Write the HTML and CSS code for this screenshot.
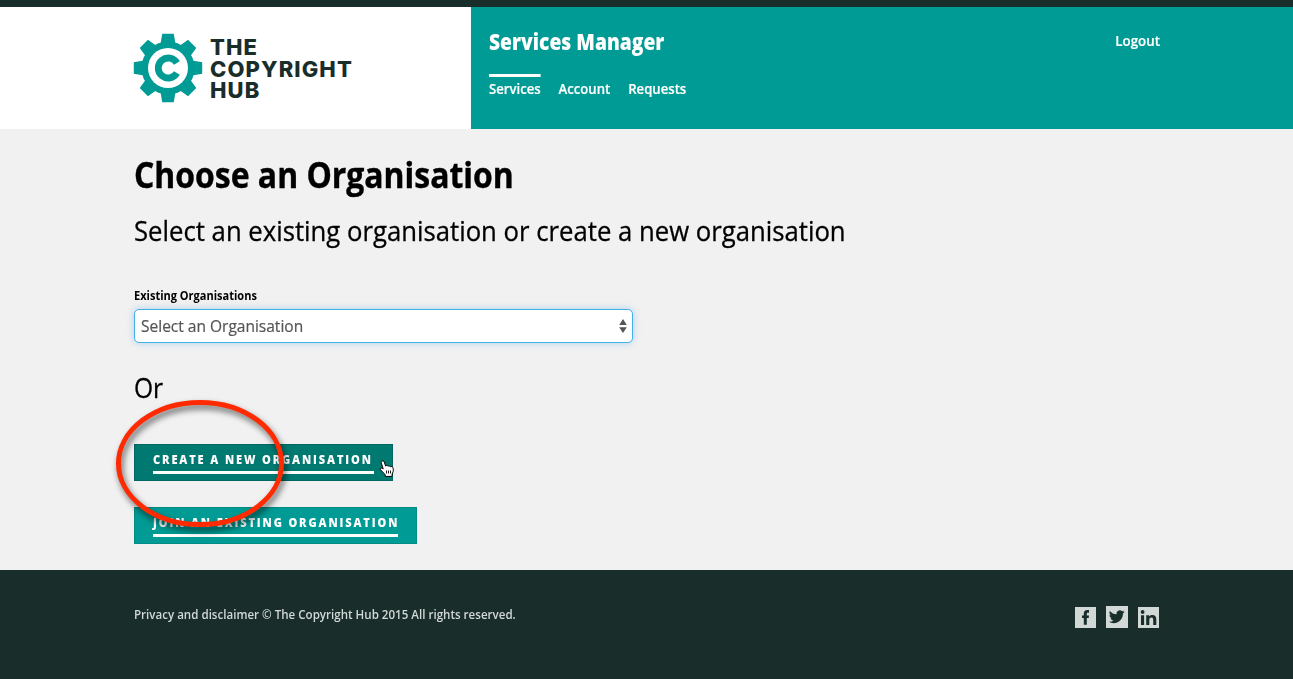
FILE: index.html
```html
<!DOCTYPE html>
<html lang="en">
<head>
<meta charset="utf-8">
<title>Services Manager - The Copyright Hub</title>
<link rel="stylesheet" href="styles.css">
</head>
<body>
<header class="header">
  <a class="brand">
    <svg class="gear" viewBox="-35 -35 70 70" width="70" height="70">
      <defs><path id="tooth" d="M-7.5-24L-5.8-34.2H5.8L7.5-24Z"/></defs>
      <g fill="#009b94">
        <circle r="26.5"/>
        <use href="#tooth"/><use href="#tooth" transform="rotate(45)"/><use href="#tooth" transform="rotate(90)"/><use href="#tooth" transform="rotate(135)"/><use href="#tooth" transform="rotate(180)"/><use href="#tooth" transform="rotate(225)"/><use href="#tooth" transform="rotate(270)"/><use href="#tooth" transform="rotate(315)"/>
      </g>
      <circle r="20" fill="#fff"/>
      <path d="M8.9-5A10 10 0 1 0 8.9 5" fill="none" stroke="#009b94" stroke-width="6.8"/>
    </svg>
    <span class="brand-name"><span>THE</span><span>COPYRIGHT</span><span>HUB</span></span>
  </a>
  <div class="panel">
    <div>
      <div class="app-title">Services Manager</div>
      <nav class="nav"><a class="active">Services</a><a>Account</a><a>Requests</a></nav>
    </div>
    <a class="logout">Logout</a>
  </div>
</header>
<main class="content">
  <h1>Choose an Organisation</h1>
  <p class="lead">Select an existing organisation or create a new organisation</p>
  <label class="label">Existing Organisations</label>
  <div class="select"><span>Select an Organisation</span>
    <svg width="8" height="14" viewBox="0 0 8 14"><path d="M4 0L7.8 6H.2ZM4 14L7.8 8.3H.2Z" fill="#555"/></svg>
  </div>
  <p class="or">Or</p>
  <div class="actions">
    <a class="button hover"><span class="create"><b>CREATE A NEW ORGANISATION</b></span></a>
    <a class="button"><span class="join"><b>JOIN AN EXISTING ORGANISATION</b></span></a>
    <svg class="marker" width="190" height="150" viewBox="0 0 190 150"><ellipse cx="95" cy="73.5" rx="81.5" ry="61" fill="none" stroke="#ff2a00" stroke-width="5"/></svg>
    <svg class="pointer" width="16" height="18" viewBox="0 0 16 18"><path d="M3.2 1C4.6.5 5.2 1.6 5.6 3L6.6 6C7.2 5.2 8.4 5.3 8.9 6.2C9.8 5.5 10.8 5.8 11.3 6.7C12.6 6.2 14 7 14.2 8.4C14.6 11 14 12.5 13.1 14V16.4H6.2V14.8C4.7 13.3 3.2 11 1.4 9.8C.5 8.6 1.8 7.6 3.2 8.3L4.2 9L2.3 3C2 2.1 2.2 1.3 3.2 1Z" fill="#fff" stroke="#000" stroke-width="1"/><path d="M7.5 10.5V13.5M9.5 10.5V13.5M11.5 10.5V13.5" stroke="#000" stroke-width=".9"/></svg>
  </div>
</main>
<footer class="footer">
  <span class="legal">Privacy and disclaimer © The Copyright Hub 2015 All rights reserved.</span>
  <div class="social">
    <svg width="21" height="21" viewBox="0 0 21 21"><path fill="#d1d8d6" d="M0 0H21V21H0Z"/><path fill="#192d2b" d="M8.8 17.8V11H7V8.4H8.8V6.9C8.8 4.3 10 3.1 12.3 3.1H14V5.8H12.9C12 5.8 11.8 6.2 11.8 7V8.4H14L13.7 11H11.8V17.8Z"/></svg>
    <svg width="22" height="22" viewBox="0 0 22 22"><path fill="#d1d8d6" d="M0 0H22V22H0Z"/><path fill="#192d2b" transform="translate(3 2.6) scale(.66)" d="M23.6 4.9c-.9.4-1.8.7-2.8.8 1-.6 1.8-1.6 2.2-2.7-1 .6-2 1-3.1 1.2a4.9 4.9 0 0 0-8.4 4.5C7.4 8.5 3.8 6.6 1.3 3.6c-1.3 2.2-.7 5.1 1.5 6.6-.8 0-1.6-.2-2.2-.6 0 2.3 1.6 4.4 3.9 4.9-.7.2-1.5.2-2.2.1.6 2 2.4 3.4 4.6 3.4A9.9 9.9 0 0 1-.4 20c2.2 1.4 4.8 2.2 7.5 2.2 9.1 0 14.3-7.7 14-14.6 1-.7 1.8-1.6 2.5-2.7z"/></svg>
    <svg width="21" height="21" viewBox="0 0 21 21"><path fill="#d1d8d6" d="M0 0H21V21H0Z"/><circle cx="4.6" cy="5" r="1.9" fill="#192d2b"/><path fill="#192d2b" d="M3 8.2H6.1V18H3ZM8.2 8.2H11.2V9.5C11.7 8.6 12.8 7.9 14.3 7.9C17.3 7.9 18.3 9.7 18.3 12.6V18H15.2V13.2C15.2 11.8 15 10.6 13.5 10.6C11.8 10.6 11.3 11.8 11.3 13.2V18H8.2Z"/></svg>
  </div>
</footer>
</body>
</html>
```
FILE: styles.css
```css
* { box-sizing: border-box; }
body {
  margin: 0;
  background: #f1f1f1;
  color: #000;
  font-family: "Open Sans", "Noto Sans", sans-serif;
}
.header {
  display: flex;
  height: 129px;
  border-top: 7px solid #192d2b;
  background: #fff;
}
.brand {
  display: flex;
  width: 471px;
  padding: 26px 0 0 133px;
  gap: 7px;
}
.brand-name {
  padding-top: 4px;
  font: 800 22px/21.6px Inter, sans-serif;
  letter-spacing: 1.1px;
  color: #192d2b;
}
.brand-name span { display: block; }
.panel {
  display: flex;
  flex: 1;
  justify-content: space-between;
  padding: 19px 133px 0 18px;
  background: #009b94;
  color: #fff;
}
.app-title {
  font-size: 22px;
  font-weight: 800;
  line-height: 30px;
  transform: scaleX(.875);
  transform-origin: left;
}
.nav {
  display: flex;
  gap: 19.2px;
  margin-top: 18px;
  font-size: 14px;
  font-weight: 600;
  line-height: 24px;
  transform: scaleX(.938);
  transform-origin: left;
  -webkit-text-stroke: .2px #fff;
}
.nav a { border-top: 3px solid transparent; }
.nav .active { border-color: #fff; }
.logout {
  font-size: 14px;
  font-weight: 600;
  line-height: 30px;
  transform: scaleX(.95);
  transform-origin: right;
  -webkit-text-stroke: .2px #fff;
}
.content {
  height: 441px;
  padding: 22px 134px 0;
}
h1 {
  margin: 0;
  font-size: 35px;
  line-height: 48px;
  transform: scaleX(.912);
  transform-origin: left;
  -webkit-text-stroke: .4px #000;
}
.lead, .or {
  margin: 13px 0 0;
  font-size: 27px;
  line-height: 38px;
  transform: scaleX(.952);
  transform-origin: left;
  -webkit-text-stroke: .3px #000;
}
.label {
  display: block;
  margin-top: 38px;
  font-size: 12px;
  font-weight: 700;
  line-height: 16px;
  transform: scaleX(.918);
  transform-origin: left;
}
.select {
  display: flex;
  align-items: center;
  justify-content: space-between;
  width: 499px;
  height: 34px;
  margin-top: 5px;
  padding: 0 5px 0 6px;
  border: 1px solid #45b0ea;
  border-radius: 5px;
  background: #fff;
  box-shadow: 0 0 7px rgba(102, 175, 233, .5);
  color: #555;
  font-size: 16.5px;
}
.select span {
  padding-bottom: 2px;
  transform: scaleX(.94);
  transform-origin: left;
  -webkit-text-stroke: .2px #555;
}
.or { margin-top: 26px; transform: scaleX(.91); }
.actions {
  position: relative;
  display: flex;
  flex-direction: column;
  align-items: flex-start;
  gap: 26px;
  margin-top: 37px;
}
.button {
  height: 37px;
  padding: 5px 18px 0;
  border: 1px solid #008b84;
  background: #009b94;
  color: #fff;
  font-size: 13px;
  line-height: 19px;
}
.button span {
  display: block;
  height: 24px;
  border-bottom: 3px solid #fff;
  white-space: nowrap;
}
.button b {
  display: inline-block;
  font-weight: 800;
  letter-spacing: 2.2px;
  transform: scaleX(.85);
  transform-origin: left;
}
.create { width: 221px; }
.join { width: 245px; }
.hover { background: #007970; border-color: #00665f; }
.marker {
  position: absolute;
  left: -29px;
  top: -54px;
  overflow: visible;
  filter: drop-shadow(2px 4px 3px rgba(0, 0, 0, .6));
}
.pointer {
  position: absolute;
  left: 245px;
  top: 16px;
}
.footer {
  display: flex;
  justify-content: space-between;
  height: 109px;
  padding: 36px 134px 0;
  background: #192d2b;
}
.legal {
  color: #d1d8d6;
  font-size: 12px;
  font-weight: 600;
  line-height: 18px;
  transform: scaleX(.964);
  transform-origin: left;
}
.social {
  display: flex;
  align-items: flex-end;
  gap: 10px;
  height: 22px;
}
```
